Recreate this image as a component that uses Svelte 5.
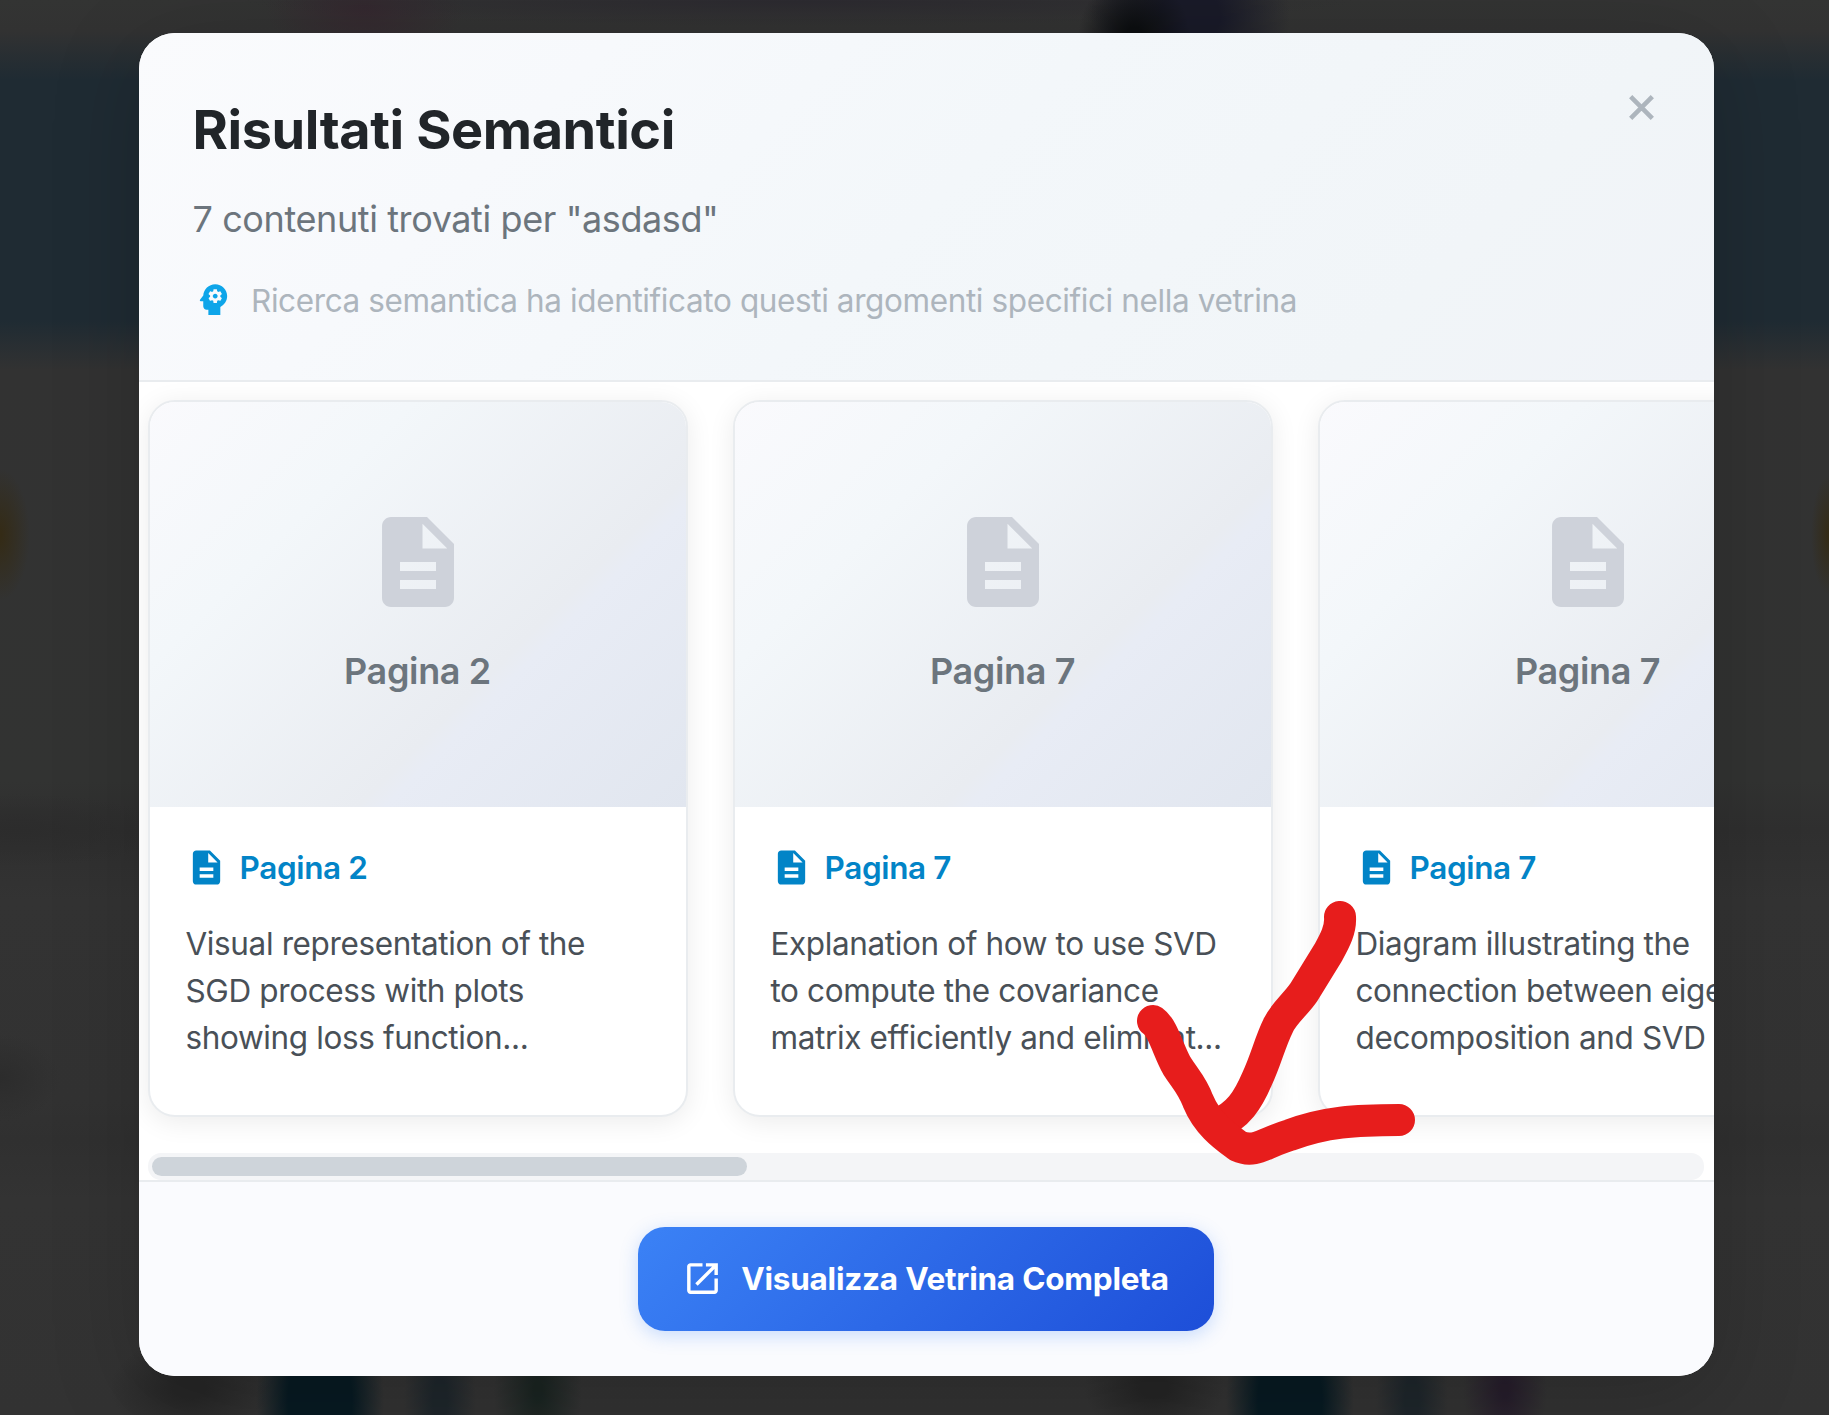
<script>
  const cards = [
    { page: 'Pagina 2', lines: ['Visual representation of the', 'SGD process with plots', 'showing loss function...'] },
    { page: 'Pagina 7', lines: ['Explanation of how to use SVD', 'to compute the covariance', 'matrix efficiently and eliminat...'] },
    { page: 'Pagina 7', lines: ['Diagram illustrating the', 'connection between eigen', 'decomposition and SVD'] }
  ];
</script>

{#snippet docIcon(cls)}
  <svg class={cls} viewBox="0 0 24 24" fill="currentColor" aria-hidden="true">
    <path d="M14 2H6c-1.1 0-1.99.9-1.99 2L4 20c0 1.1.89 2 1.99 2H18c1.1 0 2-.9 2-2V8l-6-6zm2 16H8v-2h8v2zm0-4H8v-2h8v2zm-3-5V3.500L18.500 9H13z" />
  </svg>
{/snippet}

<div class="backdrop">
  <section class="modal">
    <header>
      <div class="heading">
        <h2>Risultati Semantici</h2>
        <p class="sub">7 contenuti trovati per "asdasd"</p>
        <p class="hint">
          <svg viewBox="0 0 24 24" fill="currentColor" aria-hidden="true">
            <path d="M13 8.570c-.79 0-1.430.64-1.430 1.430s.64 1.430 1.430 1.430 1.430-.64 1.430-1.430-.64-1.430-1.430-1.430z" />
            <path d="M13 3C9.250 3 6.200 5.940 6.020 9.640L4.100 12.200c-.25.33-.01.8.4.8H6v3c0 1.100.9 2 2 2h1v3h7v-4.680c2.360-1.120 4-3.530 4-6.320 0-3.870-3.130-7-7-7zm3 7c0 .13-.01.26-.02.39l.83.66c.08.06.1.16.05.25l-.8 1.390c-.05.09-.16.12-.24.09l-.99-.4c-.21.16-.43.29-.67.39L14 13.830c-.01.1-.1.170-.2.170h-1.600c-.1 0-.18-.07-.2-.17l-.15-1.060c-.25-.1-.47-.23-.68-.39l-.99.4c-.09.03-.2 0-.25-.09l-.8-1.390c-.05-.08-.03-.19.05-.25l.84-.66c-.01-.13-.02-.26-.02-.39s.02-.27.04-.39l-.85-.66c-.08-.06-.1-.16-.05-.26l.8-1.380c.05-.09.15-.12.24-.09l1 .4c.2-.15.43-.29.67-.39L12 6.170c.02-.1.1-.17.2-.17h1.600c.1 0 .18.07.2.17l.15 1.060c.24.1.46.23.67.39l1-.4c.09-.03.2 0 .24.09l.8 1.380c.05.09.03.2-.05.26l-.85.66c.03.12.04.25.04.39z" />
          </svg>
          <span>Ricerca semantica ha identificato questi argomenti specifici nella vetrina</span>
        </p>
      </div>
      <button class="close" aria-label="Chiudi">
        <svg viewBox="0 0 24 24" fill="none" stroke="currentColor" stroke-width="4.400"><path d="M1.600 1.600 22.400 22.400M22.400 1.600 1.600 22.400" /></svg>
      </button>
    </header>

    <main>
      <div class="track">
        {#each cards as card}
          <article>
            <div class="preview">
              {@render docIcon('large')}
              <span>{card.page}</span>
            </div>
            <div class="body">
              <h3>{@render docIcon('small')}{card.page}</h3>
              <p>{#each card.lines as line}<span>{line}</span>{/each}</p>
            </div>
          </article>
        {/each}
      </div>
      <div class="scrollbar"><div class="thumb"></div></div>
    </main>

    <footer>
      <button class="cta">
        <svg viewBox="0 0 24 24" fill="currentColor" aria-hidden="true"><path d="M19 19H5V5h7V3H5c-1.110 0-2 .9-2 2v14c0 1.100.89 2 2 2h14c1.100 0 2-.9 2-2v-7h-2v7zM14 3v2h3.590l-9.830 9.830 1.410 1.410L19 6.410V10h2V3h-7z" /></svg>
        Visualizza Vetrina Completa
      </button>
    </footer>
  </section>

  <!-- Freehand arrow over the scroll area -->
  <svg class="arrow" viewBox="0 0 1829 1415" aria-hidden="true">
    <path d="M1340 917C1341 930 1334 942 1328 953L1304 992C1296 1004 1283 1014 1278 1026C1270 1042 1266 1060 1257 1079C1248 1100 1238 1116 1217 1124" />
    <path d="M1153 1021C1163 1028 1168 1050 1177 1066C1186 1080 1192 1085 1198 1101C1208 1125 1226 1137 1238 1146C1255 1154 1266 1142 1290 1135C1325 1122 1355 1120 1399 1120" />
  </svg>
</div>

<style>
  :global(body) { margin: 0; overflow: hidden; }
  * { box-sizing: border-box; }
  h2, h3, p { margin: 0; }
  button { border: 0; font: inherit; }

  .backdrop {
    position: relative;
    width: 1829px;
    height: 1415px;
    display: flex;
    align-items: flex-start;
    padding: 33px 0 0 138.500px;
    overflow: hidden;
    font-family: Inter, "Liberation Sans", sans-serif;
    background:
      radial-gradient(ellipse 30px 66px at 0 535px, #342b16 5%, transparent),
      radial-gradient(ellipse 18px 60px at 1829px 535px, #342b16 5%, transparent),
      radial-gradient(ellipse 56px 60px at 1134px 36px, #0c0e10 15%, transparent),
      radial-gradient(ellipse 100px 90px at 1190px 16px, #191a28 30%, transparent),
      radial-gradient(ellipse 560px 26px at 800px 0, #2c2a30, transparent),
      radial-gradient(ellipse 100px 60px at 365px 6px, #35282f, transparent),
      radial-gradient(ellipse 64px 120px at 320px 1400px, #071a22 50%, transparent),
      radial-gradient(ellipse 36px 100px at 440px 1400px, #1e262b 20%, transparent),
      radial-gradient(ellipse 44px 90px at 538px 1390px, #1a2421 10%, transparent),
      radial-gradient(ellipse 80px 50px at 190px 1388px, #262626 20%, transparent),
      radial-gradient(ellipse 70px 50px at 1154px 1388px, #252525 20%, transparent),
      radial-gradient(ellipse 64px 120px at 1290px 1400px, #071a22 50%, transparent),
      radial-gradient(ellipse 36px 100px at 1412px 1400px, #1e262b 20%, transparent),
      radial-gradient(ellipse 42px 70px at 1505px 1390px, #261d2b 10%, transparent),
      radial-gradient(ellipse 150px 36px at 20px 830px, #2c2c2c, transparent),
      radial-gradient(ellipse 60px 44px at 0 1078px, #2c2c2c, transparent),
      linear-gradient(#333433 0, #323232 30px, #1f2b33 80px, #1f2b33 320px, #323232 370px, #323332 780px, #2f2f2f 830px, #333 900px, #323232 1100px, #303030 1140px, #333 1200px, #323232 1415px);
  }

  .modal {
    width: 1575px;
    height: 1343px;
    display: flex;
    flex-direction: column;
    overflow: hidden;
    border-radius: 36px;
    background: #fff;
    box-shadow: 0 18px 90px rgba(0, 0, 0, 0.18);
  }

  header {
    flex: none;
    height: 349px;
    display: flex;
    justify-content: space-between;
    align-items: flex-start;
    padding: 63px 44px 0 54px;
    border-bottom: 2px solid #e9ecef;
    background: linear-gradient(135deg, #fafbfd 0%, #f7f9fc 25%, #f3f7fa 50%, #f1f5f8 80%, #f0f3f8 100%);
  }
  h2 {
    font-size: 54px;
    line-height: 67px;
    font-weight: 700;
    letter-spacing: -0.430px;
    color: #212529;
  }
  .sub {
    margin-top: 29px;
    font-size: 36px;
    line-height: 54px;
    letter-spacing: -0.400px;
    color: #6c757d;
  }
  .hint {
    display: flex;
    align-items: center;
    gap: 17.500px;
    margin-top: 30px;
    font-size: 31.500px;
    line-height: 47px;
    letter-spacing: -0.390px;
    color: #adb5bd;
  }
  .hint svg { width: 41px; height: 41px; margin-top: -1px; color: #0ea5e9; }
  .hint span { padding-top: 1px; }
  .close {
    display: grid;
    place-items: center;
    width: 56px;
    height: 56px;
    margin-top: -17px;
    padding: 0;
    background: none;
    color: #adb5bd;
  }
  .close svg { width: 25px; height: 25px; }

  main {
    flex: none;
    height: 798px;
    display: flex;
    flex-direction: column;
    padding: 18px 0 0 9.500px;
    overflow: hidden;
  }
  .track { display: flex; gap: 45px; }
  article {
    flex: none;
    width: 540px;
    height: 717px;
    overflow: hidden;
    border: 2px solid #e9ecef;
    border-radius: 27px;
    background: #fff;
    box-shadow: 0 4.500px 27px rgba(0, 0, 0, 0.08);
  }
  .preview {
    height: 405px;
    display: flex;
    flex-direction: column;
    align-items: center;
    padding: 106px 1px 0 0;
    background: linear-gradient(135deg, #fafafd 0%, #f3f7fa 28%, #e9ecf1 65%, #e8ecf5 68%, #e1e6ef 100%);
    color: #6c757d;
    font-size: 36px;
    line-height: 54px;
    font-weight: 600;
    letter-spacing: -0.350px;
  }
  .preview span { margin-top: 28px; }
  :global(svg.large) { width: 108px; height: 108px; color: #ced2da; }
  .body { padding: 36px 36px 36px 35.500px; }
  h3 {
    display: flex;
    align-items: center;
    gap: 13px;
    height: 48px;
    font-size: 31.500px;
    font-weight: 600;
    letter-spacing: -0.360px;
    color: #0284c7;
  }
  :global(svg.small) { width: 41px; height: 41px; }
  .body p {
    margin-top: 28.500px;
    font-size: 31.500px;
    line-height: 47.250px;
    letter-spacing: -0.380px;
    color: #495057;
    white-space: nowrap;
  }
  .body p span { display: block; }
  .scrollbar {
    width: 1556px;
    height: 27px;
    margin-top: 36px;
    padding: 4px;
    border-radius: 13px;
    background: #f4f5f7;
  }
  .thumb { width: 595px; height: 19px; border-radius: 9.500px; background: #ced4da; }

  footer {
    flex: 1;
    display: flex;
    justify-content: center;
    align-items: flex-start;
    padding: 45px 1px 0 0;
    border-top: 2px solid #e9ecef;
    background: #fafbfe;
  }
  .cta {
    display: flex;
    align-items: center;
    justify-content: center;
    gap: 18px;
    width: 576px;
    height: 104px;
    padding: 0 0 2px;
    border-radius: 27px;
    background: linear-gradient(135deg, #3b82f6, #1d4ed8);
    box-shadow: 0 4.500px 18px rgba(59, 130, 246, 0.25);
    color: #fff;
    font-size: 31.500px;
    font-weight: 700;
    letter-spacing: -0.230px;
    white-space: nowrap;
  }
  .cta svg { width: 41px; height: 41px; }

  .arrow {
    position: absolute;
    inset: 0;
    width: 1829px;
    height: 1415px;
    pointer-events: none;
    fill: none;
    stroke: #e71d1c;
    stroke-width: 32px;
    stroke-linecap: round;
    stroke-linejoin: round;
  }
</style>
